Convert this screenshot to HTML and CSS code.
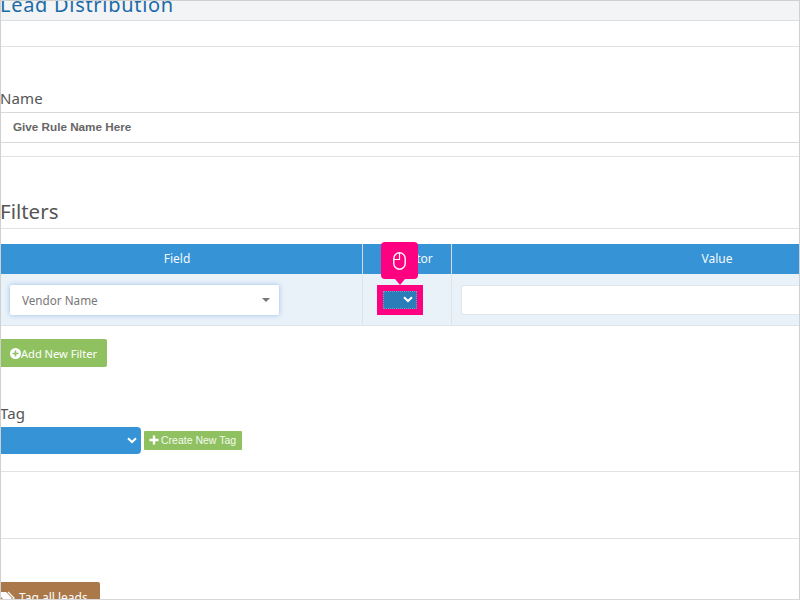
FILE: index.html
```html
<!DOCTYPE html>
<html lang="en">
<head>
<meta charset="utf-8">
<title>Lead Distribution</title>
<link rel="stylesheet" href="styles.css">
</head>
<body>
<div class="frame">
  <header class="page-head"><h1 class="page-title">Lead Distribution</h1></header>
  <div class="band band-a"></div>
  <section class="name-block">
    <label class="label">Name</label>
    <div class="name-input">Give Rule Name Here</div>
  </section>
  <h2 class="filters-title">Filters</h2>
  <div class="table">
    <div class="th th-field">Field</div>
    <div class="th">Operator</div>
    <div class="th">Value</div>
    <div class="td td-field">
      <div class="field-select"><span>Vendor Name</span><i class="caret"></i></div>
    </div>
    <div class="td td-op">
      <div class="op-select">
        <svg class="chev" width="10" height="7" viewBox="0 0 10 7"><path d="M1 1.2 5 5l4-3.8" fill="none" stroke="#fff" stroke-width="2"/></svg>
      </div>
    </div>
    <div class="td td-value"><div class="value-input"></div></div>
  </div>
  <div class="add-row"><button class="btn-add">
    <svg width="11" height="11" viewBox="0 0 11 11"><circle cx="5.5" cy="5.5" r="5.5" fill="#fff"/><path d="M5.5 2.500v6M2.500 5.500h6" stroke="#8fc161" stroke-width="1.600"/></svg>Add New Filter</button></div>
  <section class="tag-block">
    <label class="label">Tag</label>
    <div class="tag-row">
      <div class="tag-select">
        <svg width="10" height="7" viewBox="0 0 10 7"><path d="M1 1.2 5 5l4-3.8" fill="none" stroke="#fff" stroke-width="2"/></svg>
      </div>
      <button class="btn-tag"><svg width="10" height="10" viewBox="0 0 10 10"><path d="M5 .5v9M.5 5h9" stroke="#fff" stroke-width="2.400"/></svg>Create New Tag</button>
    </div>
  </section>
  <div class="band band-b"></div>
  <button class="btn-all">
    <svg width="15" height="13" viewBox="0 0 15 13"><path d="M0 1h5l6 6-5 5-6-6z" fill="#fff"/><path d="M7 1l6 6-5 5" fill="none" stroke="#fff" stroke-width="1.300"/></svg>Tag all leads</button>
  <div class="callout">
    <svg width="13" height="18" viewBox="0 0 13 18"><rect x=".8" y=".8" width="11.400" height="16.400" rx="5.700" fill="none" stroke="#fff" stroke-width="1.400"/><path d="M6.500 1v6.500H1" fill="none" stroke="#fff" stroke-width="1.200"/></svg>
  </div>
</div>
</body>
</html>
```
FILE: styles.css
```css
* { box-sizing: border-box; }
html, body { margin: 0; padding: 0; background: #fff; }
body { width: 800px; height: 600px; overflow: hidden; font-family: "Noto Sans", "Open Sans", sans-serif; color: #555; }
button { font-family: inherit; border: 0; padding: 0; cursor: pointer; }
.frame { position: relative; width: 800px; height: 600px; overflow: hidden; border: 1px solid #d0d0d0; border-bottom-color: #d8d8d8; }
.page-head { height: 20px; background: #f3f4f6; border-bottom: 1px solid #dedede; overflow: hidden; display: flex; align-items: flex-end; }
.page-title { margin: 0 0 5px -1px; font-size: 20px; line-height: 20px; font-weight: 400; color: #1a6aa8; letter-spacing: .7px; white-space: nowrap; }
.band { border-bottom: 1px solid #e2e2e2; }
.band-a { height: 26px; }
.name-block { height: 110px; padding-top: 41px; border-bottom: 1px solid #e2e2e2; }
.label { display: block; margin-left: -1px; font-size: 15px; line-height: 20px; color: #555; letter-spacing: .1px; }
.name-input { margin-top: 4px; height: 31px; padding-left: 12px; border: 1px solid #d8d8d8; border-width: 1px 0 1px 0; font: bold 11.700px/28px "Liberation Sans", sans-serif; color: #666; }
.filters-title { margin: 0; height: 72px; padding-top: 40px; font-size: 20.500px; line-height: 28px; font-weight: 400; color: #555; text-indent: -1px; border-bottom: 1px solid #e2e2e2; }
.table { margin-top: 15px; width: 981px; display: grid; grid-template-columns: 361px 89px 531px; grid-template-rows: 30px 52px; }
.th { background: #3694d6; color: #f2f8fc; font-size: 12px; line-height: 30px; text-align: center; border-left: 1px solid #d4dde4; }
.th-field { border-left: 0; padding-right: 9px; }
.td { background: #e9f1f9; border-left: 1px solid #dfe4ea; border-bottom: 1px solid #dfe3e7; display: flex; align-items: center; }
.td-field { border-left: 0; padding-left: 9px; }
.field-select { width: 269px; height: 30px; background: #fff; border-radius: 2px; box-shadow: 0 0 5px rgba(80, 150, 215, .55); padding: 0 12px; display: flex; align-items: center; justify-content: space-between; font-size: 11.700px; color: #777; }
.caret { width: 0; height: 0; border: 4px solid transparent; border-top-color: #777; border-bottom: 0; margin-right: -3px; }
.td-op { padding-left: 20px; }
.op-select { position: relative; width: 34px; height: 18px; background: #2a7db8; outline: 6px solid #ff0080; outline-offset: 0; border: 1px dotted #6d9fc4; display: flex; align-items: center; justify-content: flex-end; padding-right: 3px; }
.td-value { padding-left: 9px; }
.value-input { width: 100%; height: 30px; background: #fff; border: 1px solid #e1e4e8; border-radius: 2px; }
.add-row { margin-top: 13px; }
.btn-add { width: 106px; height: 28px; background: #8fc161; color: #fff; border-radius: 0 2px 2px 0; font-size: 11.100px; display: flex; align-items: center; padding-left: 9px; }
.tag-block { margin-top: 36px; }
.tag-row { display: flex; align-items: center; gap: 3px; margin-top: 4px; }
.tag-select { width: 140px; height: 27px; background: #3694d6; border-radius: 0 4px 4px 0; display: flex; align-items: center; justify-content: flex-end; padding-right: 4px; }
.btn-tag { width: 98px; height: 19px; background: #8fc161; color: #f4f9ee; font: 10.500px/19px "Liberation Sans", sans-serif; display: flex; align-items: center; gap: 2px; padding-left: 5px; margin-top: -1px; border-radius: 1px; }
.band-b { height: 68px; border-top: 1px solid #e2e2e2; margin-top: 17px; }
.btn-all { display: flex; align-items: center; gap: 3px; margin-top: 43px; width: 99px; height: 30px; background: #ab7849; color: #fff; font-size: 12px; border-radius: 0 2px 2px 0; white-space: nowrap; }
.callout { position: absolute; left: 380px; top: 241px; width: 37px; height: 37px; background: #ff0080; border-radius: 4px; display: flex; align-items: center; justify-content: center; }
.callout::after { content: ""; position: absolute; left: 14px; top: 37px; border: 5px solid transparent; border-top: 6px solid #ff0080; border-bottom: 0; }
```
